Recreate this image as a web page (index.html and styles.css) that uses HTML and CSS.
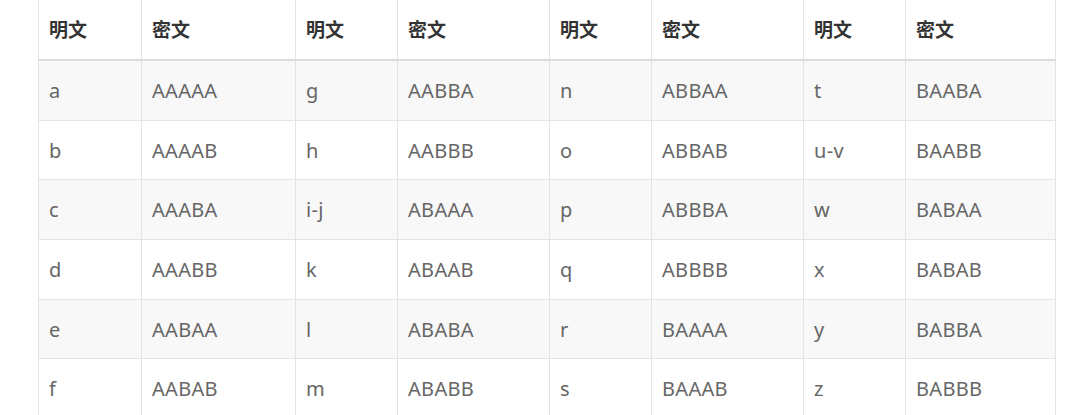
FILE: index.html
```html
<!DOCTYPE html>
<html lang="zh">
<head>
<meta charset="utf-8">
<link rel="stylesheet" href="styles.css">
</head>
<body>
<table class="cipher">
  <colgroup>
    <col class="w103"><col class="w154">
    <col class="w102"><col class="w152">
    <col class="w102"><col class="w152">
    <col class="w102"><col class="w150">
  </colgroup>
  <thead>
    <tr><th>明文</th><th>密文</th><th>明文</th><th>密文</th><th>明文</th><th>密文</th><th>明文</th><th>密文</th></tr>
  </thead>
  <tbody>
    <tr><td>a</td><td>AAAAA</td><td>g</td><td>AABBA</td><td>n</td><td>ABBAA</td><td>t</td><td>BAABA</td></tr>
    <tr><td>b</td><td>AAAAB</td><td>h</td><td>AABBB</td><td>o</td><td>ABBAB</td><td>u-v</td><td>BAABB</td></tr>
    <tr><td>c</td><td>AAABA</td><td>i-j</td><td>ABAAA</td><td>p</td><td>ABBBA</td><td>w</td><td>BABAA</td></tr>
    <tr><td>d</td><td>AAABB</td><td>k</td><td>ABAAB</td><td>q</td><td>ABBBB</td><td>x</td><td>BABAB</td></tr>
    <tr><td>e</td><td>AABAA</td><td>l</td><td>ABABA</td><td>r</td><td>BAAAA</td><td>y</td><td>BABBA</td></tr>
    <tr><td>f</td><td>AABAB</td><td>m</td><td>ABABB</td><td>s</td><td>BAAAB</td><td>z</td><td>BABBB</td></tr>
  </tbody>
</table>
</body>
</html>
```
FILE: styles.css
```css
html, body {
  margin: 0;
  padding: 0;
  background: #ffffff;
}
body {
  padding-left: 38px;
  font-family: "Noto Sans", "Noto Sans CJK SC", sans-serif;
}
.cipher {
  border-collapse: collapse;
  table-layout: fixed;
  width: 1017px;
  margin-top: -1px;
}
.w103 { width: 103px; }
.w154 { width: 154px; }
.w102 { width: 102px; }
.w152 { width: 152px; }
.w150 { width: 150px; }
.cipher th,
.cipher td {
  border: 1px solid #e4e4e4;
  text-align: left;
  padding: 0 10px;
  white-space: nowrap;
}
.cipher th {
  height: 56px;
  padding-bottom: 3px;
  font-size: 19px;
  font-weight: bold;
  color: #333333;
  border-bottom: 2px solid #dcdcdc;
  font-family: "Noto Sans CJK SC", sans-serif;
}
.cipher td {
  height: 58.7px;
  font-size: 20px;
  color: #666666;
  letter-spacing: 0.3px;
}
.cipher tbody tr:nth-child(odd) td {
  background: #f8f8f8;
}
```
